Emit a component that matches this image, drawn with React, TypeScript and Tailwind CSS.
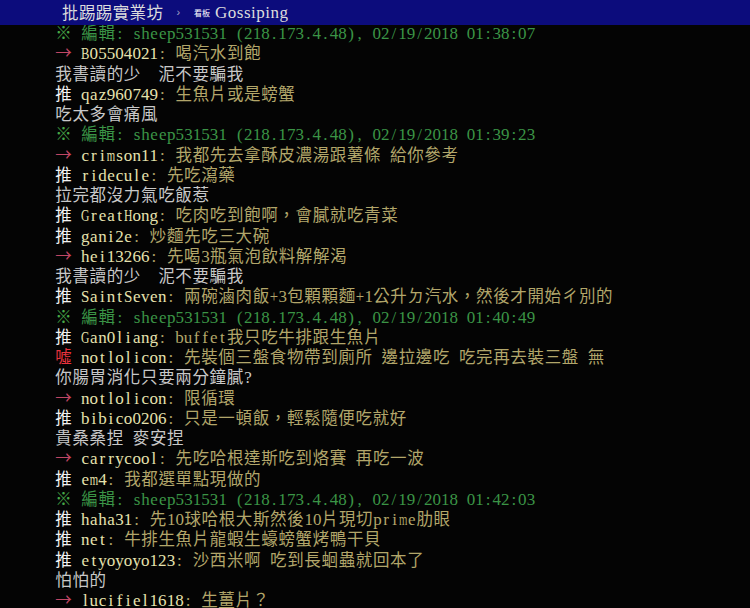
import type { CSSProperties } from "react";

type Seg = [string, string];

const WHITE = "text-[#f2f2f2]";
const RED = "text-[#e8323c]";
const ARROW = "text-[#c04664]";
const USER = "text-[#e6e2ae]";
const BODY = "text-[#b2a66a]";
const PLAIN = "text-[#c8c8c8]";
const GREEN = "text-[#3b9446]";
const GREEN2 = "text-[#48a848]";

const edit = (time: string): Seg[] => [
    ["※ ", GREEN2],
    ["編輯: sheep531531 (218.173.4.48), 02/19/2018 " + time, GREEN],
];

const push = (tag: "推" | "噓" | "→", user: string, body: string): Seg[] => [
    [tag + " ", tag === "推" ? WHITE : tag === "噓" ? RED : ARROW],
    [user, USER],
    [": " + body, BODY],
];

const plain = (text: string): Seg[] => [[text, PLAIN]];

const lines: Seg[][] = [
    edit("01:38:07"),
    push("→", "B05504021", "喝汽水到飽"),
    plain("我書讀的少　泥不要騙我"),
    push("推", "qaz960749", "生魚片或是螃蟹"),
    plain("吃太多會痛風"),
    edit("01:39:23"),
    push("→", "crimson11", "我都先去拿酥皮濃湯跟薯條 給你參考"),
    push("推", "ridecule", "先吃瀉藥"),
    plain("拉完都沒力氣吃飯惹"),
    push("推", "GreatHong", "吃肉吃到飽啊，會膩就吃青菜"),
    push("推", "gani2e", "炒麵先吃三大碗"),
    push("→", "hei13266", "先喝3瓶氣泡飲料解解渴"),
    plain("我書讀的少　泥不要騙我"),
    push("推", "SaintSeven", "兩碗滷肉飯+3包顆顆麵+1公升ㄉ汽水，然後才開始ㄔ別的"),
    edit("01:40:49"),
    push("推", "Gan0liang", "buffet我只吃牛排跟生魚片"),
    push("噓", "notlolicon", "先裝個三盤食物帶到廁所 邊拉邊吃 吃完再去裝三盤 無"),
    plain("你腸胃消化只要兩分鐘膩?"),
    push("→", "notlolicon", "限循環"),
    push("推", "bibico0206", "只是一頓飯，輕鬆隨便吃就好"),
    plain("貴桑桑捏 麥安捏"),
    push("→", "carrycool", "先吃哈根達斯吃到烙賽 再吃一波"),
    push("推", "em4", "我都選單點現做的"),
    edit("01:42:03"),
    push("推", "haha31", "先10球哈根大斯然後10片現切prime肋眼"),
    push("推", "net", "牛排生魚片龍蝦生蠔螃蟹烤鴨干貝"),
    push("推", "etyoyoyo123", "沙西米啊 吃到長蛔蟲就回本了"),
    plain("怕怕的"),
    push("→", "lucifiel1618", "生薑片？"),
];

const LINE = 20.26;

// Liberation Serif advances (em) for glyphs wider than half a cell
const ADV: Record<string, number> = {
    A: 0.722, B: 0.667, C: 0.667, D: 0.722, E: 0.611, F: 0.556, G: 0.722, H: 0.722,
    K: 0.722, L: 0.611, M: 0.889, N: 0.722, O: 0.722, P: 0.556, Q: 0.722, R: 0.667,
    S: 0.556, T: 0.611, U: 0.722, V: 0.722, W: 0.944, X: 0.722, Y: 0.722, Z: 0.611,
    m: 0.778, w: 0.722, "+": 0.564,
};

const isWide = (ch: string) => {
    const c = ch.codePointAt(0) ?? 0;
    return c >= 0x2e80 || ch === "→" || ch === "※";
};

// a wide latin glyph gets a smaller size so it fits one 8.57px cell, then is stretched back up
const narrowStyle = (ch: string): CSSProperties | undefined => {
    const adv = ADV[ch];
    if (!adv) return undefined;
    const fs = 8.4 / adv;
    const base = (LINE - fs * 1.107) / 2 + fs * 0.891;
    return { fontSize: fs, transform: `scaleY(${17 / fs})`, transformOrigin: `50% ${base}px` };
};

// split text into runs of full-width and half-width characters
const runs = (text: string) => {
    const out: { wide: boolean; text: string }[] = [];
    for (const ch of Array.from(text)) {
        const wide = isWide(ch);
        const last = out[out.length - 1];
        if (last && last.wide === wide) last.text += ch;
        else out.push({ wide, text: ch });
    }
    return out;
};

const Line = ({ segs }: { segs: Seg[] }) => (
    <div className="h-[20.26px] leading-[20.26px] whitespace-nowrap">
        {segs.map(([text, color], i) =>
            runs(text).map((r, j) =>
                r.wide ? (
                    <span
                        key={`${i}-${j}`}
                        className={`inline-block pl-[0.32px] whitespace-pre font-['Noto_Sans_CJK_TC',sans-serif] text-[16.5px] tracking-[0.64px] ${color}`}
                    >
                        {r.text}
                    </span>
                ) : (
                    Array.from(r.text).map((ch, k) => (
                        <span
                            key={`${i}-${j}-${k}`}
                            className={`inline-block w-[8.57px] text-center whitespace-pre font-['Liberation_Serif',serif] text-[17px] ${color}`}
                            style={narrowStyle(ch)}
                        >
                            {ch}
                        </span>
                    ))
                )
            )
        )}
    </div>
);

export default function App() {
    return (
        <div className="w-[750px] h-[608px] bg-[#040404] overflow-hidden">
            {/* top bar */}
            <div className="relative z-10 h-[25px] bg-[#0c0c7c] flex items-center pl-[62px]">
                <span className="font-['Noto_Sans_CJK_TC',sans-serif] text-[16.5px] leading-none text-[#dcdcdc] tracking-[0.4px]">
                    批踢踢實業坊
                </span>
                <span className="ml-[13px] font-['Liberation_Sans',sans-serif] text-[11px] text-[#a8a8c8]">›</span>
                <span className="ml-[14px] font-['Noto_Sans_CJK_TC',sans-serif] text-[8px] text-white">看板</span>
                <span className="ml-[5px] font-['Liberation_Serif',serif] text-[17px] text-[#dcdcdc] tracking-[0.5px]">
                    Gossiping
                </span>
            </div>

            <div className="-mt-[3px] pl-[55px]">
                {lines.map((segs, i) => (
                    <Line key={i} segs={segs} />
                ))}
            </div>
        </div>
    );
}
